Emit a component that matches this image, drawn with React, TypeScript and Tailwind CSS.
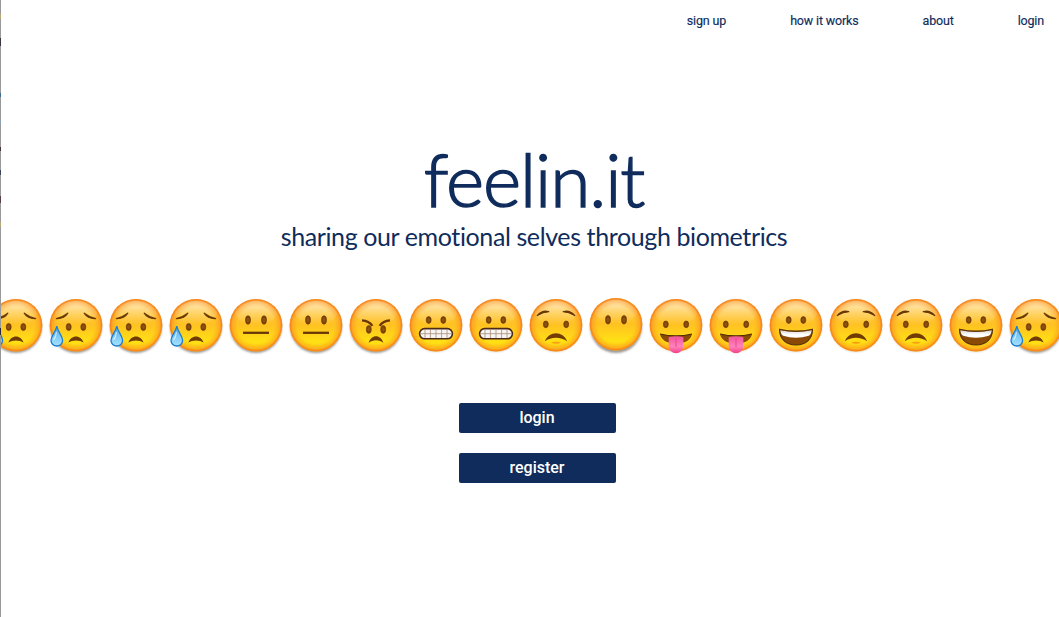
import React from "react";

type Mood = "cry" | "neutral" | "angry" | "grimace" | "worried" | "blank" | "tongue" | "grin";

const moods: Mood[] = [
  "cry", "cry", "cry", "cry", "neutral", "neutral", "angry", "grimace", "grimace",
  "worried", "blank", "tongue", "tongue", "grin", "worried", "worried", "grin", "cry",
];

const links = ["sign up", "how it works", "about", "login"];

// Marks along the left window edge: [top, height, colour]
const edgeMarks: [number, number, string][] = [
  [14, 5, "#b8a878"], [38, 8, "#3c3540"], [93, 4, "#3f6a8c"], [120, 4, "#8aa4b4"],
  [147, 4, "#46343c"], [170, 5, "#39435c"], [196, 7, "#564044"], [222, 5, "#b8a878"],
  [328, 7, "#252840"],
];

function Eyes({ dx, y, ry = 3.6 }: { dx: number; y: number; ry?: number }) {
  return (
    <g fill="url(#eye)" stroke="#6b3a05" strokeWidth="0.6">
      <ellipse cx={-dx} cy={y} rx="2.5" ry={ry} />
      <ellipse cx={dx} cy={y} rx="2.5" ry={ry} />
    </g>
  );
}

function Features({ mood }: { mood: Mood }) {
  switch (mood) {
    case "cry":
      return (
        <>
          <g fill="#6b3c05" stroke="#6b3c05" strokeWidth="1.3" strokeLinejoin="round">
            <path d="M-19.6 -6.4Q-12 -6 -8.2 -11.8Q-13 -8 -19.6 -6.4Z" />
            <path d="M19.6 -6.4Q12 -6 8.2 -11.8Q13 -8 19.6 -6.4Z" />
          </g>
          <Eyes dx={7.3} y={2} />
          <path d="M-7.6 17.6C-5 9.3 5 9.3 7.6 17.6C3.5 14.7 -3.5 14.7 -7.6 17.6Z" fill="#713b06" />
          <path d="M-19.2 1C-18.3 7 -13.4 10.5 -13.4 15.6A5.8 5.4 0 0 1 -25 15.6C-25 10.5 -20.1 7 -19.2 1Z" fill="url(#tear)" stroke="#1e7dcc" strokeWidth="1.3" />
          <path d="M-19.5 7Q-20 12 -22.5 15" fill="none" stroke="#fff" strokeOpacity="0.65" strokeWidth="1.2" />
        </>
      );
    case "neutral":
      return (
        <>
          <Eyes dx={8} y={-5} ry={4.2} />
          <path d="M-13 7.8H13" stroke="#673706" strokeWidth="2.3" />
        </>
      );
    case "angry":
      return (
        <>
          <Eyes dx={7.2} y={4.4} ry={3.9} />
          <path d="M-14 -4.6Q-7 -4 -3.6 0.8M14 -4.6Q7 -4 3.6 0.8" fill="none" stroke="#673706" strokeWidth="2.3" />
          <path d="M-7.4 18C-5 9 5 9 7.4 18C3.5 14.4 -3.5 14.4 -7.4 18Z" fill="#713b06" />
        </>
      );
    case "grimace":
      return (
        <>
          <Eyes dx={7.3} y={-5} ry={3.4} />
          <rect x="-16.4" y="3.6" width="32.8" height="10.2" rx="5" fill="#f7f5f2" stroke="#4e2a18" strokeWidth="1.6" />
          <path d="M-15.5 8.7H15.5M-11 4.5V13M-5.6 4.5V13M0 4.5V13M5.6 4.5V13M11 4.5V13" stroke="#a98a78" strokeWidth="0.8" />
        </>
      );
    case "worried":
      return (
        <>
          <path d="M-18.8 -9.4Q-13.5 -15.4 -7.2 -13.3Q-13 -13 -18.8 -9.4ZM18.8 -9.4Q13.5 -15.4 7.2 -13.3Q13 -13 18.8 -9.4Z" fill="#673706" stroke="#673706" strokeWidth="1.2" strokeLinejoin="round" />
          <Eyes dx={10.2} y={-0.7} ry={3.4} />
          <path d="M-11.2 16.2C-7 5.5 7 5.5 11.2 16.2C5 11.5 -5 11.5 -11.2 16.2Z" fill="#713b06" />
          <path d="M-5 17.4Q0 16 5 17.4Q0 20.2 -5 17.4Z" fill="#ff9a13" />
        </>
      );
    case "blank":
      return <Eyes dx={8} y={-5.2} ry={4.2} />;
    case "tongue":
      return (
        <>
          <Eyes dx={10.2} y={-0.7} ry={3.4} />
          <path d="M-16 9Q0 12.8 16 9C14.5 15 10 18.4 0 18.4C-10 18.4 -14.5 15 -16 9Z" fill="#8a4a05" />
          <path d="M-16 9Q0 12.8 16 9" fill="none" stroke="#4e2a08" strokeWidth="1.2" />
          <path d="M-7.3 12Q0 10.6 7.3 12V21C7.3 30.5 -7.3 30.5 -7.3 21Z" fill="url(#tongue)" />
          <path d="M0 13V22" stroke="#e8458b" strokeWidth="0.9" />
        </>
      );
    case "grin":
      return (
        <>
          <Eyes dx={7.3} y={-5} ry={3.4} />
          <path d="M-16.5 4.2Q0 8 16.5 4.2C16.5 13 11 20 0 20C-11 20 -16.5 13 -16.5 4.2Z" fill="#8a4a05" />
          <path d="M-15.8 5.2Q0 8.8 15.8 5.2Q15.2 9.5 12.8 10.8Q0 14.5 -12.8 10.8Q-15.2 9.5 -15.8 5.2Z" fill="url(#teeth)" />
          <path d="M-16.5 4.2Q0 8 16.5 4.2C16.5 13 11 20 0 20C-11 20 -16.5 13 -16.5 4.2Z" fill="none" stroke="#58300a" strokeWidth="1.1" />
        </>
      );
  }
}

function Face({ mood }: { mood: Mood }) {
  const deep = ["cry", "neutral", "angry", "blank"].includes(mood);
  const cy = mood === "blank" ? -0.8 : 0.2;
  return (
    <svg className="h-[60px] w-[60px] shrink-0" viewBox="-30 -30 60 60">
      <ellipse cx="0" cy={deep ? 2.2 : 0.8} rx="25.8" ry="25.8" fill="#55504a" opacity={deep ? 0.6 : 0.3} filter="url(#soft)" />
      <circle cx="0" cy={cy} r="26.3" fill="url(#skin)" />
      <ellipse cx="0" cy={cy - 12.5} rx="21" ry="12" fill="url(#shine)" />
      <circle cx="0" cy={cy} r="26.3" fill="url(#rim)" />
      <Features mood={mood} />
    </svg>
  );
}

function Defs() {
  return (
    <svg className="absolute h-0 w-0" aria-hidden="true">
      <defs>
        <linearGradient id="skin" x1="0" y1="0" x2="0" y2="1">
          <stop offset="0" stopColor="#ffc857" />
          <stop offset="0.5" stopColor="#ffc222" />
          <stop offset="0.82" stopColor="#ffe114" />
          <stop offset="1" stopColor="#ffc81a" />
        </linearGradient>
        <radialGradient id="rim">
          <stop offset="0.7" stopColor="#fb981e" stopOpacity="0" />
          <stop offset="0.9" stopColor="#fb901e" stopOpacity="0.5" />
          <stop offset="0.96" stopColor="#f8851c" stopOpacity="0.95" />
          <stop offset="1" stopColor="#f5801e" stopOpacity="0.9" />
        </radialGradient>
        <linearGradient id="shine" x1="0" y1="0" x2="0" y2="1">
          <stop offset="0" stopColor="#fff4d8" stopOpacity="0.85" />
          <stop offset="1" stopColor="#ffe08a" stopOpacity="0" />
        </linearGradient>
        <radialGradient id="eye">
          <stop offset="0" stopColor="#9a5a10" />
          <stop offset="1" stopColor="#713d05" />
        </radialGradient>
        <linearGradient id="teeth" x1="0" y1="0" x2="0" y2="1">
          <stop offset="0" stopColor="#d4d1d0" />
          <stop offset="0.6" stopColor="#ffffff" />
        </linearGradient>
        <linearGradient id="tear" x1="0" y1="0" x2="0" y2="1">
          <stop offset="0" stopColor="#3d9be2" />
          <stop offset="0.5" stopColor="#7cc8f6" />
          <stop offset="1" stopColor="#a4e2ff" />
        </linearGradient>
        <linearGradient id="tongue" x1="0" y1="0" x2="0" y2="1">
          <stop offset="0" stopColor="#f2559b" />
          <stop offset="0.6" stopColor="#ff82bb" />
          <stop offset="1" stopColor="#f23f88" />
        </linearGradient>
        <filter id="soft" x="-20%" y="-20%" width="140%" height="140%">
          <feGaussianBlur stdDeviation="1" />
        </filter>
      </defs>
    </svg>
  );
}

export default function App() {
  return (
    <div className="relative h-[617px] w-full overflow-hidden bg-white text-[#0f2c5c]">
      <Defs />
      <nav className="flex h-[42px] items-center justify-end gap-16 pr-[15px] font-['Roboto',sans-serif] text-[12.5px] tracking-[-0.16px] [-webkit-text-stroke:0.15px_#0f2c5c]">
        {links.map((label) => (
          <a key={label} href="#">{label}</a>
        ))}
      </nav>

      <header className="flex flex-col items-center pt-[93px] pl-[9px] font-['Lato',sans-serif]">
        <h1 className="h-[85px] text-[73px] leading-[88px] font-light tracking-[-1.1px] whitespace-nowrap [-webkit-text-stroke:1.5px_#0f2c5c]">feelin.it</h1>
        <p className="h-[35px] text-[25px] leading-8 tracking-[-0.39px] whitespace-nowrap">sharing our emotional selves through biometrics</p>
      </header>

      <div className="mt-10 -ml-3.5 flex h-[60px] w-[1080px]">
        {moods.map((mood, i) => (
          <Face key={i} mood={mood} />
        ))}
      </div>

      <div className="mt-12 ml-[459px] flex w-[157px] flex-col gap-5 font-['Roboto',sans-serif] text-base font-medium text-white">
        <button className="h-[30px] rounded-xs bg-[#0f2c5c] pr-px">login</button>
        <button className="h-[30px] rounded-xs bg-[#0f2c5c] pr-px">register</button>
      </div>

      <div className="absolute inset-y-0 left-0 w-px bg-[#999]">
        {edgeMarks.map(([top, height, color]) => (
          <div key={top} className="absolute w-px" style={{ top, height, backgroundColor: color }} />
        ))}
      </div>
    </div>
  );
}
